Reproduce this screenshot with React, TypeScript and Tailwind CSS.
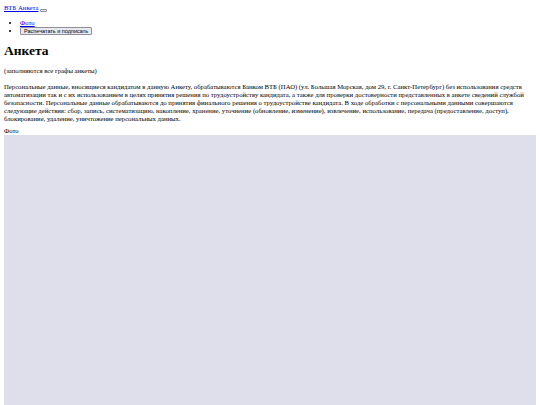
export default function App() {
  return (
    <div className="m-[4px] text-[6.7px] leading-[8px] text-black" style={{ fontFamily: '"Liberation Serif", serif' }}>
      <div className="flex items-end gap-[2px] mt-[1px]">
        <a href="#" className="text-[#0000ee] underline">ВТБ Анкета</a>
        <button className="w-[7px] h-[3px] bg-[#e9e9ed] border border-[#8f8f9d] rounded-[1px]" />
      </div>
      <ul className="list-disc pl-[16px] mt-[7px] mb-[4px]">
        <li><a href="#" className="text-[#0000ee] underline">Фото</a></li>
        <li>
          <button
            className="px-[3px] h-[8px] leading-[6px] text-[5.5px] bg-[#e9e9ed] border border-[#8f8f9d] rounded-[1px]"
            style={{ fontFamily: '"Liberation Sans", sans-serif' }}
          >
            Распечатать и подписать
          </button>
        </li>
      </ul>
      <h1 className="text-[13.5px] leading-[16px] font-bold mt-[8px] mb-[8px]">Анкета</h1>
      <p className="my-[8px]">(заполняются все графы анкеты)</p>
      <p className="mt-[8px] mb-[4px]">
        Персональные данные, вносящиеся кандидатом в данную Анкету, обрабатываются Банком ВТБ (ПАО) (ул. Большая Морская, дом 29, г. Санкт-Петербург) без использования средств автоматизации так и с их использованием в целях принятия решения по трудоустройству кандидата, а также для проверки достоверности представленных в анкете сведений службой безопасности. Персональные данные обрабатываются до принятия финального решения о трудоустройстве кандидата. В ходе обработки с персональными данными совершаются следующие действия: сбор, запись, систематизацию, накопление, хранение, уточнение (обновление, изменение), извлечение, использование, передача (предоставление, доступ), блокирование, удаление, уничтожение персональных данных.
      </p>
      <div>Фото</div>
      <div className="h-[300px] bg-[#dfdfec]" />
    </div>
  );
}
